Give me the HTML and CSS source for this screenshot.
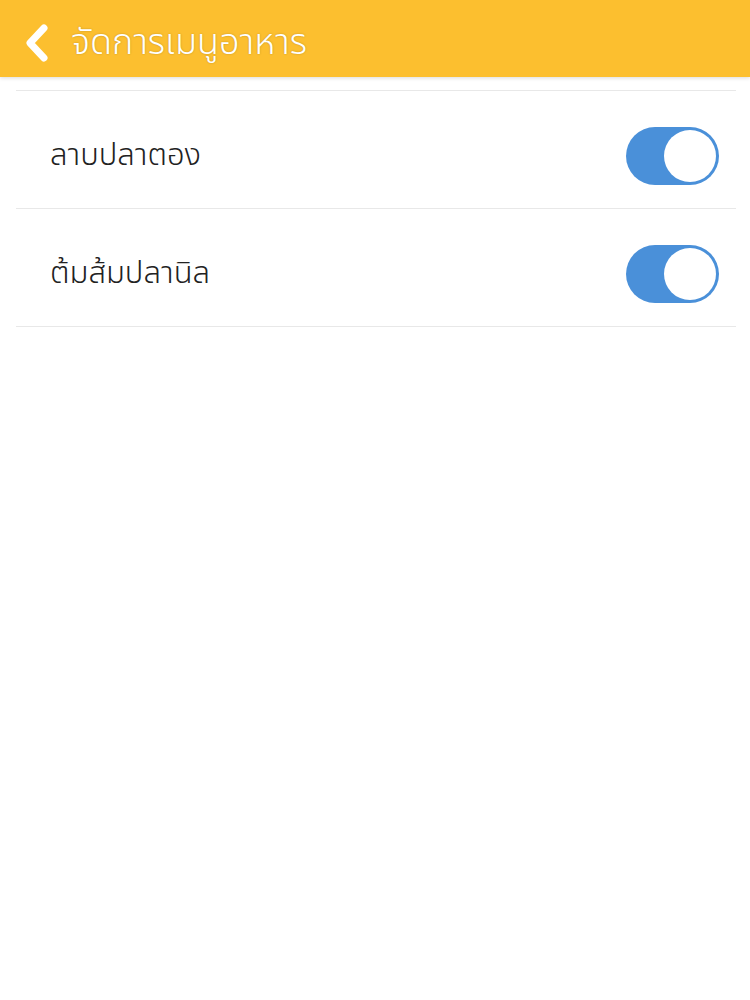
FILE: index.html
```html
<!DOCTYPE html>
<html lang="th">
<head>
<meta charset="UTF-8">
<meta name="viewport" content="width=device-width, initial-scale=1.0">
<title>จัดการเมนูอาหาร</title>
<link rel="stylesheet" href="styles.css">
</head>

<body>
<div class="header">
    <svg class="back" width="30" height="40" viewBox="0 0 30 40">
        <path d="M22 5 L8 20 L22 35" fill="none" stroke="#fff" stroke-width="7" stroke-linecap="round" stroke-linejoin="round"/>
    </svg>
    <span class="title">จัดการเมนูอาหาร</span>
</div>

<div class="list">
    <div class="item">
        <span>ลาบปลาตอง</span>
        <label class="switch on"><span class="knob"></span></label>
    </div>
    <div class="item">
        <span>ต้มส้มปลานิล</span>
        <label class="switch on"><span class="knob"></span></label>
    </div>
</div>
</body>
</html>
```

FILE: styles.css
```css
body {
    margin: 0;
    font-family: "Noto Sans Thai", "Noto Sans", sans-serif;
    background: #fff;
}
.header {
    height: 69px;
    padding: 8px 0 0 22px;
    background-color: #fcbf2f;
    display: flex;
    align-items: center;
    box-shadow: 0 1px 4px rgba(0, 0, 0, 0.15);
}
.back {
    margin-right: 19px;
}
.title {
    color: #fff;
    font-size: 36px;
    font-weight: 300;
    text-shadow: 0 0 2px rgba(0, 0, 0, 0.25);
}
.list {
    margin: 13px 14px 0 16px;
    border-top: 1px solid #e8e8e8;
}
.item {
    display: flex;
    justify-content: space-between;
    align-items: center;
    height: 105px;
    padding: 12px 17px 0 34px;
    border-bottom: 1px solid #e8e8e8;
    font-size: 31px;
    font-weight: 300;
    color: #222;
}
.switch {
    width: 93px;
    height: 58px;
    border-radius: 29px;
    background: #4a90d9;
    display: flex;
    align-items: center;
    justify-content: flex-end;
    padding: 0 3px;
    box-sizing: border-box;
}
.knob {
    width: 52px;
    height: 52px;
    border-radius: 50%;
    background: #fff;
}
```
